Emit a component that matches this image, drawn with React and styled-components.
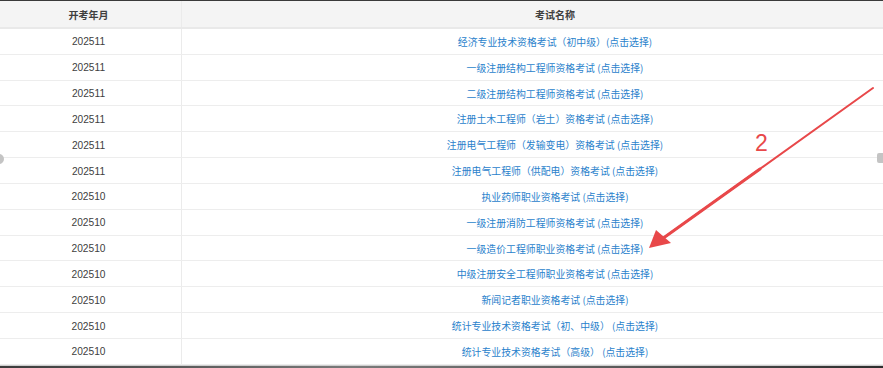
import React from "react";
import styled, { createGlobalStyle } from "styled-components";

const Global = createGlobalStyle`
  html, body { margin: 0; padding: 0; background: #fff; }
  body { width: 883px; height: 368px; overflow: hidden; font-family: "Liberation Sans", "Noto Sans CJK SC", sans-serif; }
`;

const Page = styled.div`
  position: relative;
  width: 883px;
  height: 368px;
  overflow: hidden;
  display: flex;
  flex-direction: column;
  border-top: 1px solid #3a3a3a;
  box-sizing: border-box;
`;

const Table = styled.div`
  display: flex;
  flex-direction: column;
  margin-left: -4px;
  width: 932px;
`;

const Row = styled.div`
  display: grid;
  grid-template-columns: 185px 747px;
  height: ${(p) => (p.$head ? "28px" : "25.83px")};
  box-sizing: border-box;
  border-bottom: ${(p) => (p.$head ? "2px solid #e9e9e9" : "1px solid #ededed")};
  background: ${(p) => (p.$head ? "#f4f4f4" : "#fff")};
`;

const Cell = styled.div`
  display: flex;
  align-items: center;
  justify-content: center;
  border-left: ${(p) => (p.$divider ? "1px solid #ebebeb" : "none")};
  font-size: ${(p) => (p.$head ? "10px" : p.$num ? "10.2px" : "9.9px")};
  font-weight: ${(p) => (p.$head ? "bold" : "normal")};
  color: ${(p) => (p.$link ? "#2a82cc" : "#404040")};
  font-family: ${(p) =>
    p.$num ? `"Liberation Sans", Arial, sans-serif` : `"Noto Sans CJK SC", "Liberation Sans", sans-serif`};
  white-space: nowrap;
  padding-top: ${(p) => (p.$head ? "0" : "1px")};
`;

const BottomBar = styled.div`
  height: 4px;
  margin-top: auto;
  background: linear-gradient(to right, #3c3c3c, #7a7a7a 40%, #5a5a5a 70%, #2e2e2e);
  border-top: 1px solid #cfcfcf;
`;

const SideTab = styled.div`
  position: absolute;
  top: ${(p) => p.$top}px;
  ${(p) => (p.$right ? "right: -4px;" : "left: -6px;")}
  width: 10px;
  height: 10px;
  border-radius: ${(p) => (p.$right ? "2px" : "50%")};
  background: #c4c4c4;
`;

const Overlay = styled.svg`
  position: absolute;
  left: 0;
  top: 0;
  pointer-events: none;
`;

const rows = [
  ["202511", "经济专业技术资格考试（初中级）(点击选择)"],
  ["202511", "一级注册结构工程师资格考试 (点击选择)"],
  ["202511", "二级注册结构工程师资格考试 (点击选择)"],
  ["202511", "注册土木工程师（岩土）资格考试 (点击选择)"],
  ["202511", "注册电气工程师（发输变电）资格考试 (点击选择)"],
  ["202511", "注册电气工程师（供配电）资格考试 (点击选择)"],
  ["202510", "执业药师职业资格考试 (点击选择)"],
  ["202510", "一级注册消防工程师资格考试 (点击选择)"],
  ["202510", "一级造价工程师职业资格考试 (点击选择)"],
  ["202510", "中级注册安全工程师职业资格考试 (点击选择)"],
  ["202510", "新闻记者职业资格考试 (点击选择)"],
  ["202510", "统计专业技术资格考试（初、中级） (点击选择)"],
  ["202510", "统计专业技术资格考试（高级） (点击选择)"],
];

export default function App() {
  return (
    <>
      <Global />
      <Page>
        <Table>
          <Row $head>
            <Cell $head>开考年月</Cell>
            <Cell $head $divider>考试名称</Cell>
          </Row>
          {rows.map(([d, n], i) => (
            <Row key={i}>
              <Cell $num>{d}</Cell>
              <Cell $divider $link>{n}</Cell>
            </Row>
          ))}
        </Table>
        <BottomBar />
        <SideTab $top={153} />
        <SideTab $top={152} $right />
        <Overlay width="883" height="368" viewBox="0 0 883 368">
          <path d="M873 87 L662 238" stroke="#e8484a" strokeWidth="2" strokeLinecap="round" fill="none" />
          <path d="M760 168 L662 238" stroke="#e8484a" strokeWidth="3" strokeLinecap="round" fill="none" />
          <path d="M649 247 L656 229 L671 242 Z" fill="#e8484a" />
          <text x="755" y="150" fontSize="23" fill="#e8484a" fontFamily="Liberation Sans, sans-serif">2</text>
        </Overlay>
      </Page>
    </>
  );
}
